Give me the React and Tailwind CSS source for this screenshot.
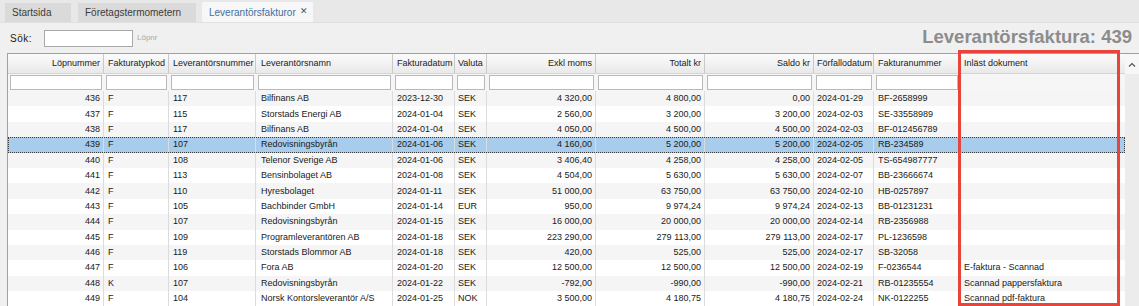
import React from "react";

const GRID =
  "grid grid-cols-[96px_65px_87px_137px_62px_32px_109px_109px_109px_60px_86px_166px]";

const columns = [
  { label: "Löpnummer", align: "text-right pr-[3px]" },
  { label: "Fakturatypkod", align: "pl-[4px]" },
  { label: "Leverantörsnummer", align: "pl-[4px]" },
  { label: "Leverantörsnamn", align: "pl-[5px]" },
  { label: "Fakturadatum", align: "pl-[4px]" },
  { label: "Valuta", align: "pl-[3px]" },
  { label: "Exkl moms", align: "text-right pr-[3px]" },
  { label: "Totalt kr", align: "text-right pr-[3px]" },
  { label: "Saldo kr", align: "text-right pr-[3px]" },
  { label: "Förfallodatum", align: "pl-[3px]" },
  { label: "Fakturanummer", align: "pl-[4px]" },
  { label: "Inläst dokument", align: "pl-[4px]" },
];

const rows = [
  ["436", "F", "117", "Bilfinans AB", "2023-12-30", "SEK", "4 320,00", "4 800,00", "0,00", "2024-01-29", "BF-2658999", ""],
  ["437", "F", "115", "Storstads Energi AB", "2024-01-04", "SEK", "2 560,00", "3 200,00", "3 200,00", "2024-02-03", "SE-33558989", ""],
  ["438", "F", "117", "Bilfinans AB", "2024-01-04", "SEK", "4 050,00", "4 500,00", "4 500,00", "2024-02-03", "BF-012456789", ""],
  ["439", "F", "107", "Redovisningsbyrån", "2024-01-06", "SEK", "4 160,00", "5 200,00", "5 200,00", "2024-02-05", "RB-234589", ""],
  ["440", "F", "108", "Telenor Sverige AB", "2024-01-06", "SEK", "3 406,40", "4 258,00", "4 258,00", "2024-02-05", "TS-654987777", ""],
  ["441", "F", "113", "Bensinbolaget AB", "2024-01-08", "SEK", "4 504,00", "5 630,00", "5 630,00", "2024-02-07", "BB-23666674", ""],
  ["442", "F", "110", "Hyresbolaget", "2024-01-11", "SEK", "51 000,00", "63 750,00", "63 750,00", "2024-02-10", "HB-0257897", ""],
  ["443", "F", "105", "Bachbinder GmbH", "2024-01-14", "EUR", "950,00", "9 974,24", "9 974,24", "2024-02-13", "BB-01231231", ""],
  ["444", "F", "107", "Redovisningsbyrån", "2024-01-15", "SEK", "16 000,00", "20 000,00", "20 000,00", "2024-02-14", "RB-2356988", ""],
  ["445", "F", "109", "Programleverantören AB", "2024-01-18", "SEK", "223 290,00", "279 113,00", "279 113,00", "2024-02-17", "PL-1236598", ""],
  ["446", "F", "119", "Storstads Blommor AB", "2024-01-18", "SEK", "420,00", "525,00", "525,00", "2024-02-17", "SB-32058", ""],
  ["447", "F", "106", "Fora AB", "2024-01-20", "SEK", "12 500,00", "12 500,00", "12 500,00", "2024-02-19", "F-0236544", "E-faktura - Scannad"],
  ["448", "K", "107", "Redovisningsbyrån", "2024-01-22", "SEK", "-792,00", "-990,00", "-990,00", "2024-02-21", "RB-01235554", "Scannad pappersfaktura"],
  ["449", "F", "104", "Norsk Kontorsleverantör A/S", "2024-01-25", "NOK", "3 500,00", "4 180,75", "4 180,75", "2024-02-24", "NK-0122255", "Scannad pdf-faktura"],
];

const Tab = ({ label, width, active }) => (
  <div
    className={`flex items-center pl-[7px] ${width} ${
      active
        ? "bg-[#f7f7f7] text-[#3f6f9f] h-[20px]"
        : "bg-[#dadada] text-[#3a3a3a] h-[19px]"
    }`}
  >
    <span>{label}</span>
    {active && <span className="ml-auto mr-[5px] text-[#555] text-[9px]">✕</span>}
  </div>
);

export default function App() {
  return (
    <div className="w-[1139px] h-[306px] bg-[#f0f0f0] overflow-hidden relative font-['Liberation_Sans',Arial,sans-serif] text-[#1a1a1a]">
      {/* Tabs */}
      <div className="h-[23px] bg-[#e8e8e8] flex items-end pl-[5px] text-[10px] border-b border-[#e0e0e0]">
        <Tab label="Startsida" width="w-[66px]" />
        <div className="w-[7px]" />
        <Tab label="Företagstermometern" width="w-[118px]" />
        <div className="w-[6px]" />
        <Tab label="Leverantörsfakturor" width="w-[111px]" active />
      </div>

      {/* Search + title */}
      <div className="h-[30px] flex items-center pl-[10px] pr-[7px]">
        <span className="text-[10px] w-[34px] tracking-[0.5px]">Sök:</span>
        <div className="w-[89px] h-[17px] bg-white border border-[#a9a9a9]" />
        <span className="ml-[4px] text-[8px] text-[#a8a8a8]">Löpnr</span>
        <span className="ml-auto text-[18.5px] font-bold text-[#8c8c8c] -mt-[2px]">
          Leverantörsfaktura: 439
        </span>
      </div>

      {/* Grid */}
      <div className="flex ml-[7px] border-t border-[#a0a0a0] text-[9px]">
        <div className="w-[1118px] border-l border-[#a0a0a0]">
          <div className={`${GRID} h-[20px] bg-gradient-to-b from-[#fbfbfb] to-[#e9e9e9] border-b border-[#d4d4d4]`}>
            {columns.map((c, i) => (
              <div
                key={c.label}
                className={`flex items-center ${c.align.includes("text-right") ? "justify-end" : ""} ${c.align} ${
                  i < columns.length - 1 ? "border-r border-[#c9c9c9]" : ""
                }`}
              >
                {c.label}
              </div>
            ))}
          </div>
          <div className={`${GRID} h-[17px] bg-[#f6f6f6]`}>
            {columns.map((c, i) => (
              <div key={c.label} className="px-[2px] pt-[1px]">
                {i < columns.length - 1 && (
                  <div className="h-[15px] bg-white border border-[#b9b9b9]" />
                )}
              </div>
            ))}
          </div>
          {rows.map((r) => {
            const n = Number(r[0]);
            const selected = n === 439;
            return (
              <div
                key={r[0]}
                className={`${GRID} h-[15.4px] ${
                  selected
                    ? "bg-[#a8ccec] outline outline-1 outline-dotted outline-[#3a3a3a] -outline-offset-1"
                    : n % 2 === 0
                    ? "bg-[#f5f5f5]"
                    : "bg-white"
                }`}
              >
                {r.map((v, i) => (
                  <div
                    key={i}
                    className={`flex items-center whitespace-nowrap overflow-hidden leading-none ${
                      columns[i].align.includes("text-right") ? "justify-end" : ""
                    } ${columns[i].align} ${
                      i < r.length - 1 ? "border-r border-[#dcdcdc]" : ""
                    }`}
                  >
                    {v}
                  </div>
                ))}
              </div>
            );
          })}
        </div>
        {/* Scrollbar */}
        <div className="w-[14px] bg-[#ececec] flex flex-col">
          <div className="h-[20px] bg-[#f7f7f7] flex items-center justify-center">
            <svg width="8" height="5" viewBox="0 0 8 5">
              <path d="M1 4.5 L4 1.5 L7 4.5" fill="none" stroke="#555" strokeWidth="1.2" />
            </svg>
          </div>
        </div>
      </div>

      {/* Annotation box */}
      <div className="absolute left-[958px] top-[50px] w-[162px] h-[256px] border-[3px] border-[#e8443c] pointer-events-none" />
    </div>
  );
}
